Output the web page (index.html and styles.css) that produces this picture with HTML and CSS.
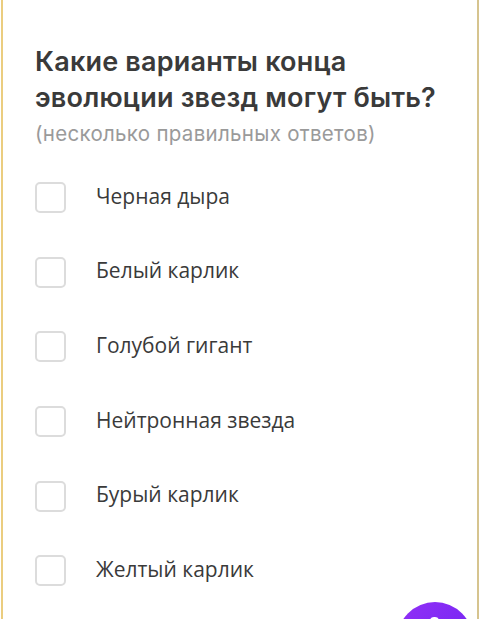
FILE: index.html
```html
<!DOCTYPE html>
<html lang="ru">
<head>
<meta charset="utf-8">
<link rel="stylesheet" href="styles.css">
</head>
<body>
<div class="card">
  <h1 class="title">Какие варианты конца эволюции звезд могут быть?</h1>
  <p class="hint">(несколько правильных ответов)</p>
  <ul class="options">
    <li class="option"><span class="box"></span><span class="label">Черная дыра</span></li>
    <li class="option"><span class="box"></span><span class="label">Белый карлик</span></li>
    <li class="option"><span class="box"></span><span class="label">Голубой гигант</span></li>
    <li class="option"><span class="box"></span><span class="label">Нейтронная звезда</span></li>
    <li class="option"><span class="box"></span><span class="label">Бурый карлик</span></li>
    <li class="option"><span class="box"></span><span class="label">Желтый карлик</span></li>
  </ul>
  <div class="fab"><span class="fab-dot"></span></div>
</div>
</body>
</html>
```
FILE: styles.css
```css
html, body {
  margin: 0;
  padding: 0;
  background: #ffffff;
  overflow: hidden;
}
.card {
  position: relative;
  box-sizing: border-box;
  width: 478px;
  height: 619px;
  margin-left: 1px;
  border-left: 2px solid #ebcd7f;
  border-right: 2px solid #d6c48f;
  padding: 44px 0 0 32px;
  background: #ffffff;
  overflow: hidden;
}
.title {
  margin: 0;
  font-family: Inter, "Noto Sans", sans-serif;
  font-weight: 600;
  font-size: 27px;
  line-height: 35.5px;
  color: #3a3a3a;
  width: 420px;
  letter-spacing: 0.2px;
}
.hint {
  margin: 5px 0 0 0;
  font-family: Inter, "Noto Sans", sans-serif;
  font-size: 20.5px;
  line-height: 28px;
  color: #9a9a9a;
  letter-spacing: 0.3px;
}
.options {
  list-style: none;
  margin: 34px 0 0 0;
  padding: 0;
  display: flex;
  flex-direction: column;
  gap: 43.7px;
}
.option {
  display: flex;
  align-items: center;
  gap: 30px;
  height: 31px;
}
.box {
  box-sizing: border-box;
  width: 31px;
  height: 31px;
  border: 2px solid #dcdcdc;
  border-radius: 5px;
  flex: none;
}
.label {
  font-family: "Open Sans", "Noto Sans", sans-serif;
  font-size: 21px;
  color: #3a3a3a;
  margin-top: -4px;
}
.fab {
  position: absolute;
  left: 394px;
  top: 602px;
  width: 76px;
  height: 76px;
  border-radius: 50%;
  background: linear-gradient(135deg, #9330f6, #6a22f2);
}
.fab-dot {
  position: absolute;
  left: 33px;
  top: 15px;
  width: 9px;
  height: 6px;
  border-radius: 4px 4px 0 0;
  background: #ffffff;
}
```
